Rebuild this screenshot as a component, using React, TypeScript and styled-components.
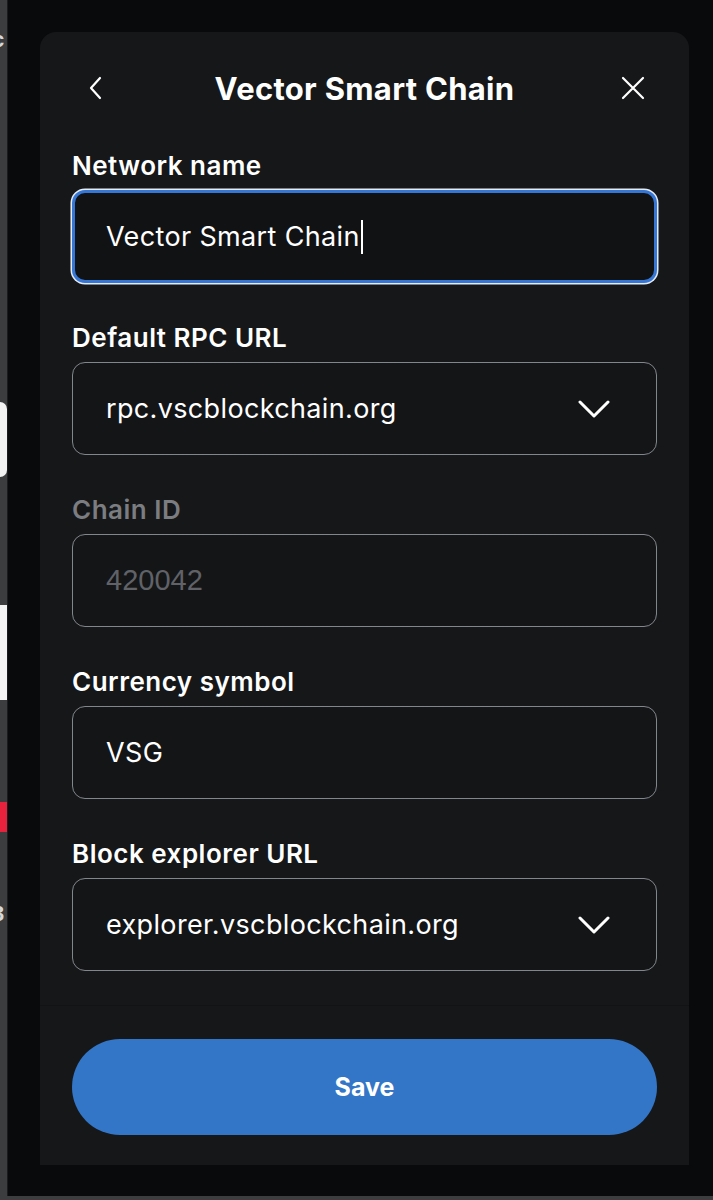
import React from "react";
import styled, { createGlobalStyle } from "styled-components";

const Global = createGlobalStyle`
  html, body { margin: 0; padding: 0; background: #090a0b; }
  body { font-family: Inter, "Noto Sans", sans-serif; -webkit-font-smoothing: antialiased; }
  * { box-sizing: border-box; }
`;

const Page = styled.div`
  width: 713px;
  height: 1200px;
  display: flex;
  flex-direction: column;
  overflow: hidden;
`;

const Top = styled.div`
  height: 1196px;
  display: flex;
`;

const Strip = styled.div`
  width: 8px;
  background: #3c3d3f;
  border-right: 1px solid #1b1c1d;
  display: flex;
  flex-direction: column;
  overflow: hidden;
`;

const StripChar = styled.div<{ $top: number }>`
  margin-top: ${(p) => p.$top}px;
  margin-left: -8px;
  font: 700 22px "Liberation Sans", sans-serif;
  color: #d8d8d8;
  line-height: 24px;
`;

const StripBlock = styled.div<{ $top: number; $h: number; $bg: string; $round?: boolean }>`
  margin-top: ${(p) => p.$top}px;
  height: ${(p) => p.$h}px;
  background: ${(p) => p.$bg};
  border-radius: ${(p) => (p.$round ? "0 40px 40px 0" : "0")};
`;

const Backdrop = styled.div`
  flex: 1;
  padding: 32px 0 0 32px;
  background: #090a0b;
`;

const Modal = styled.div`
  width: 649px;
  height: 1133px;
  background: #161719;
  border-radius: 16px 16px 0 0;
  display: flex;
  flex-direction: column;
`;

const Header = styled.div`
  margin-top: 24px;
  height: 64px;
  padding: 0 44px;
  display: grid;
  grid-template-columns: 24px 1fr 24px;
  align-items: center;
`;

const IconButton = styled.button`
  width: 24px;
  height: 24px;
  padding: 0;
  border: none;
  background: none;
  display: flex;
  align-items: center;
  justify-content: center;
  color: #fff;
`;

const Title = styled.h1`
  margin: 0;
  text-align: center;
  font-size: 31px;
  font-weight: 700;
  color: #fff;
  letter-spacing: 0.3px;
  white-space: nowrap;
`;

const Form = styled.div`
  flex: 1;
  padding: 30px 32px 34px;
  display: flex;
  flex-direction: column;
  gap: 39px;
`;

const Field = styled.div`
  display: flex;
  flex-direction: column;
`;

const Label = styled.label<{ $muted?: boolean }>`
  font-size: 26px;
  line-height: 32px;
  font-weight: 600;
  letter-spacing: 0.5px;
  margin-bottom: 8px;
  color: ${(p) => (p.$muted ? "#7b7d81" : "#ffffff")};
`;

const Box = styled.div<{ $focused?: boolean }>`
  height: 93px;
  border-radius: 13px;
  display: flex;
  align-items: center;
  background: ${(p) => (p.$focused ? "#111214" : "#141517")};
  border: ${(p) => (p.$focused ? "3px solid #3677d6" : "1px solid #82868c")};
  box-shadow: ${(p) => (p.$focused ? "0 0 0 1.5px #e6ecf6" : "none")};
  padding: 0 ${(p) => (p.$focused ? 31 : 33)}px;
`;

const Value = styled.span<{ $disabled?: boolean }>`
  font-size: ${(p) => (p.$disabled ? 29 : 27)}px;
  letter-spacing: ${(p) => (p.$disabled ? 0 : 0.35)}px;
  font-family: ${(p) => (p.$disabled ? '"Liberation Sans", Arial, sans-serif' : 'Inter, "Noto Sans", sans-serif')};
  color: ${(p) => (p.$disabled ? "#606267" : "#ffffff")};
  font-weight: 400;
  display: flex;
  align-items: center;
  white-space: nowrap;
`;

const Caret = styled.span`
  display: inline-block;
  width: 2px;
  height: 34px;
  background: #fff;
  margin-left: 1px;
`;

const Chevron = styled.svg`
  margin-left: auto;
  margin-right: 13px;
  flex-shrink: 0;
`;

const Footer = styled.div`
  height: 160px;
  padding: 33px 32px 31px;
  border-top: 1px solid #121315;
`;

const SaveButton = styled.button`
  width: 100%;
  height: 96px;
  border: none;
  border-radius: 48px;
  background: #3375c7;
  color: #fff;
  font-family: Inter, "Noto Sans", sans-serif;
  font-size: 25px;
  font-weight: 700;
`;

const BottomBar = styled.div`
  height: 4px;
  background: #3c3d3f;
`;

const ChevronDown = () => (
  <Chevron width="32" height="18" viewBox="0 0 32 18">
    <polyline points="2,2 16,16 30,2" fill="none" stroke="#fff" strokeWidth="3" strokeLinecap="round" strokeLinejoin="round" />
  </Chevron>
);

export default function App() {
  return (
    <Page>
      <Global />
      <Top>
        <Strip>
          <StripChar $top={28}>c</StripChar>
          <StripBlock $top={350} $h={75} $bg="#f2f2f2" $round />
          <StripBlock $top={128} $h={95} $bg="#f4f4f4" />
          <StripBlock $top={102} $h={30} $bg="#e8213c" />
          <StripChar $top={70}>3</StripChar>
        </Strip>
        <Backdrop>
          <Modal>
            <Header>
              <IconButton aria-label="Back">
                <svg width="16" height="24" viewBox="0 0 16 24">
                  <polyline points="12,2 3,12 12,22" fill="none" stroke="#fff" strokeWidth="2.2" strokeLinecap="round" strokeLinejoin="round" />
                </svg>
              </IconButton>
              <Title>Vector Smart Chain</Title>
              <IconButton aria-label="Close">
                <svg width="24" height="24" viewBox="0 0 24 24">
                  <path d="M2 2 L22 22 M22 2 L2 22" fill="none" stroke="#fff" strokeWidth="2.2" strokeLinecap="round" />
                </svg>
              </IconButton>
            </Header>
            <Form>
              <Field>
                <Label>Network name</Label>
                <Box $focused>
                  <Value>
                    Vector Smart Chain
                    <Caret />
                  </Value>
                </Box>
              </Field>
              <Field>
                <Label>Default RPC URL</Label>
                <Box>
                  <Value>rpc.vscblockchain.org</Value>
                  <ChevronDown />
                </Box>
              </Field>
              <Field>
                <Label $muted>Chain ID</Label>
                <Box>
                  <Value $disabled>420042</Value>
                </Box>
              </Field>
              <Field>
                <Label>Currency symbol</Label>
                <Box>
                  <Value>VSG</Value>
                </Box>
              </Field>
              <Field>
                <Label>Block explorer URL</Label>
                <Box>
                  <Value>explorer.vscblockchain.org</Value>
                  <ChevronDown />
                </Box>
              </Field>
            </Form>
            <Footer>
              <SaveButton>Save</SaveButton>
            </Footer>
          </Modal>
        </Backdrop>
      </Top>
      <BottomBar />
    </Page>
  );
}
